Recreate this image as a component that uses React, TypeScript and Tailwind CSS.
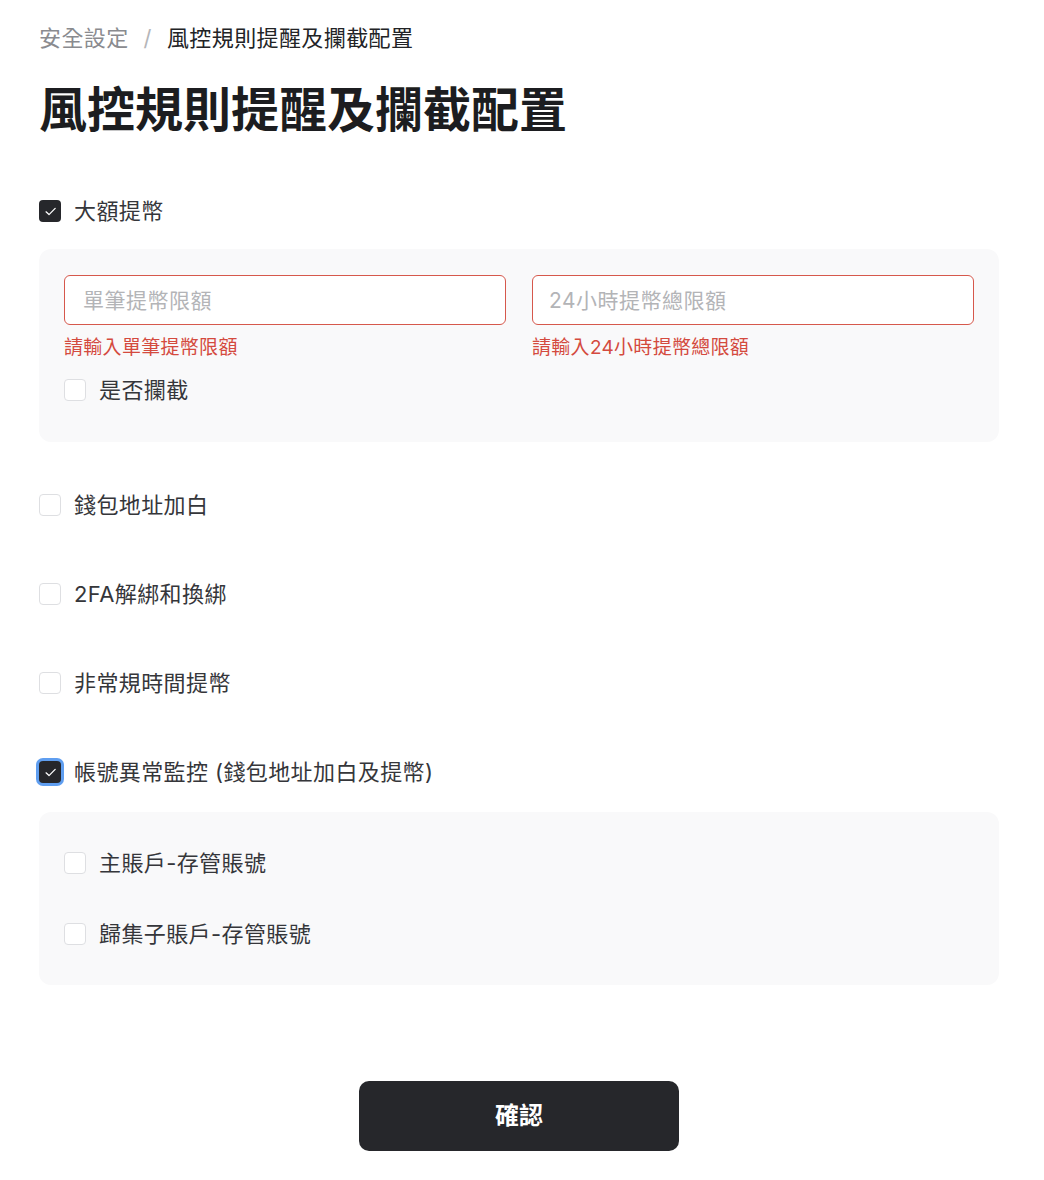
import React from "react";

interface CheckProps {
  checked?: boolean;
  focused?: boolean;
  label: string;
}

// Square checkbox with a thin tick, dark when checked
const CheckRow: React.FC<CheckProps> = ({ checked, focused, label }) => {
  return (
    <label className="flex h-[30px] items-center gap-[13px] cursor-pointer">
      <span
        className={`flex h-[22px] w-[22px] shrink-0 items-center justify-center rounded-[4px] ${
          checked
            ? "bg-[#26272b]"
            : "border border-[#dedfe2] bg-white"
        } ${focused ? "ring-[3px] ring-[#5f9ef0]" : ""}`}
      >
        {checked && (
          <svg viewBox="0 0 16 16" className="h-[17px] w-[17px]" fill="none">
            <path
              d="M3.8 8.3l2.8 2.6 5.8-5.8"
              stroke="white"
              strokeWidth={1.2}
              strokeLinecap="round"
              strokeLinejoin="round"
            />
          </svg>
        )}
      </span>
      <span className="text-[22px] leading-[30px] tracking-[0.4px] text-[#35363a]">{label}</span>
    </label>
  );
};

function App() {
  const fontStack = {
    fontFamily: 'Inter, "Noto Sans CJK TC", sans-serif',
  };

  return (
    <div className="min-h-screen bg-white px-[39px] pt-[23px] pb-[30px] w-[1038px]" style={fontStack}>
      {/* breadcrumb */}
      <div className="flex items-center text-[22px] leading-[30px] tracking-[0.4px]">
        <span className="text-[#8a8b8f]">安全設定</span>
        <span className="mx-[15px] text-[#b5b6b9]">/</span>
        <span className="text-[#222326]">風控規則提醒及攔截配置</span>
      </div>

      <h1 className="mt-[28px] text-[48px] font-bold leading-[58px] text-[#1c1d20]">
        風控規則提醒及攔截配置
      </h1>

      <div className="mt-[57px]">
        <CheckRow checked label="大額提幣" />
      </div>

      <div className="mt-[23px] rounded-xl bg-[#f9f9fa] px-[25px] pt-[26px] pb-[37px]">
        <div className="grid grid-cols-2 gap-[26px]">
          <div>
            <input
              className="h-[50px] w-full rounded-[6px] border-[1.5px] border-[#d6584c] bg-white px-[18px] text-[21px] tracking-[0.5px] text-[#333] outline-none placeholder:text-[#b3b4b7]"
              placeholder="單筆提幣限額"
            />
            <p className="mt-[11px] text-[19px] leading-[24px] tracking-[0.3px] text-[#d44a3e]">請輸入單筆提幣限額</p>
          </div>
          <div>
            <input
              className="h-[50px] w-full rounded-[6px] border-[1.5px] border-[#d6584c] bg-white px-[16px] text-[21px] tracking-[0.5px] text-[#333] outline-none placeholder:text-[#b3b4b7]"
              placeholder="24小時提幣總限額"
            />
            <p className="mt-[11px] text-[19px] leading-[24px] tracking-[0.3px] text-[#d44a3e]">請輸入24小時提幣總限額</p>
          </div>
        </div>
        <div className="mt-[15px]">
          <CheckRow label="是否攔截" />
        </div>
      </div>

      <div className="mt-[48px] flex flex-col gap-[59px]">
        <CheckRow label="錢包地址加白" />
        <CheckRow label="2FA解綁和換綁" />
        <CheckRow label="非常規時間提幣" />
        <CheckRow checked focused label="帳號異常監控 (錢包地址加白及提幣)" />
      </div>

      <div className="mt-[25px] flex flex-col gap-[41px] rounded-xl bg-[#f9f9fa] px-[25px] py-[36px]">
        <CheckRow label="主賬戶-存管賬號" />
        <CheckRow label="歸集子賬戶-存管賬號" />
      </div>

      <div className="mt-[96px] flex justify-center">
        <button className="h-[70px] w-[320px] rounded-[10px] bg-[#26272b] text-[24px] font-bold text-white">
          確認
        </button>
      </div>
    </div>
  );
}

export default App;
